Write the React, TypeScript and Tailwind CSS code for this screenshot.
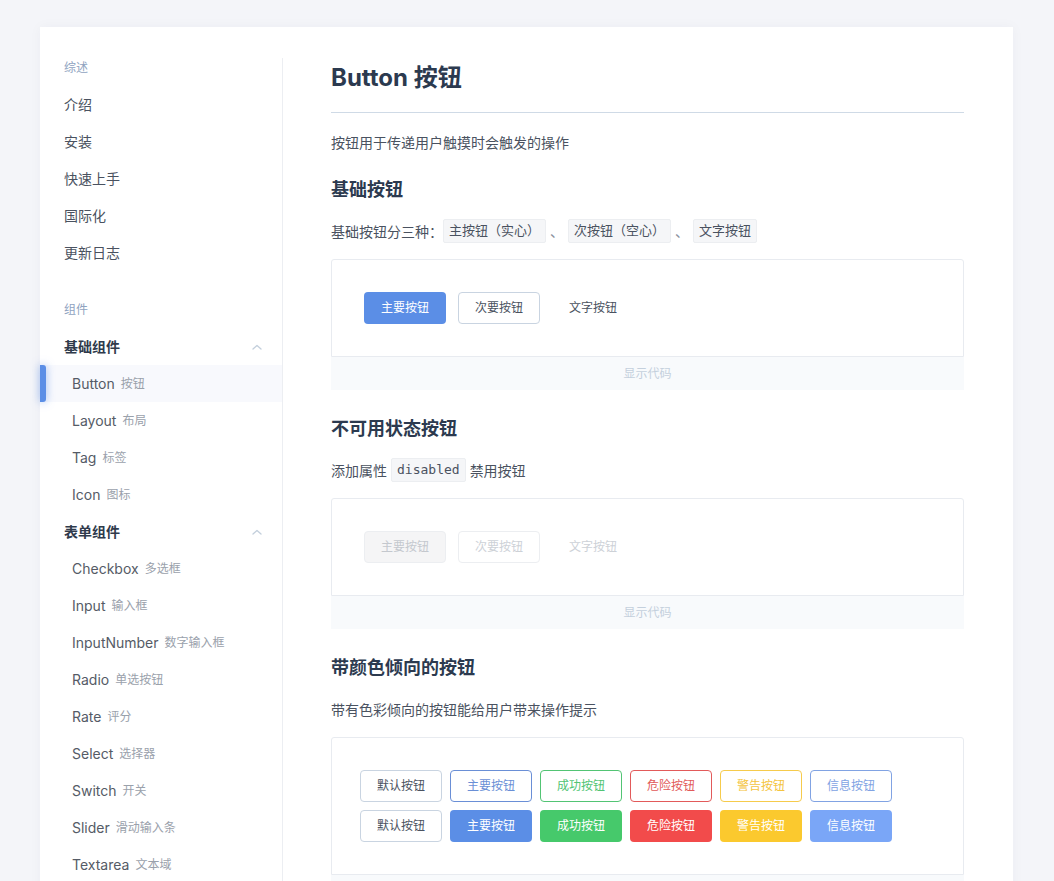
import React from "react";

const FONT = { fontFamily: 'Inter, "Noto Sans CJK SC", sans-serif' };

// ── Sidebar ──────────────────────────────────────────────────────────────────

const overview = ["介绍", "安装", "快速上手", "国际化", "更新日志"];

const basic = [
  ["Button", "按钮"],
  ["Layout", "布局"],
  ["Tag", "标签"],
  ["Icon", "图标"],
];

const form = [
  ["Checkbox", "多选框"],
  ["Input", "输入框"],
  ["InputNumber", "数字输入框"],
  ["Radio", "单选按钮"],
  ["Rate", "评分"],
  ["Select", "选择器"],
  ["Switch", "开关"],
  ["Slider", "滑动输入条"],
  ["Textarea", "文本域"],
];

function Chevron() {
  return (
    <svg width="10" height="6" viewBox="0 0 10 6" fill="none" className="mr-[20px]">
      <path d="M1 5 L5 1.5 L9 5" stroke="#c3cfdc" strokeWidth="1.3" strokeLinecap="round" strokeLinejoin="round" />
    </svg>
  );
}

function SubItem({ en, zh, active }: { en: string; zh: string; active?: boolean }) {
  return (
    <div className={["relative h-[37px] flex items-center pl-8", active ? "bg-[#f8f9fd]" : ""].join(" ")}>
      {active && (
        <span className="absolute left-0 top-0 h-full w-[6px] rounded-r-[3px] bg-[#5b8ee6] shadow-[0_0_8px_rgba(91,142,230,0.6)]" />
      )}
      <span className="text-[14px] text-[#555b66]">{en}</span>
      <span className="ml-[6px] text-[12px] text-[#9aa1ab]">{zh}</span>
    </div>
  );
}

function Sidebar() {
  return (
    <aside className="w-[243px] shrink-0 border-r border-[#eceef2] mt-[31px]">
      <div className="mt-[1px] h-[18px] flex items-center pl-6 text-[12px] text-[#8fa3bf]">综述</div>
      <div className="mt-[9px]">
        {overview.map((t) => (
          <div key={t} className="h-[37px] flex items-center pl-6 text-[14px] text-[#4a5260]">
            {t}
          </div>
        ))}
      </div>
      <div className="mt-[27px] h-[24px] flex items-center pl-6 text-[12px] text-[#8fa3bf]">组件</div>
      <div className="mt-[6px] h-[37px] flex items-center justify-between pl-6 text-[14px] font-semibold text-[#2f3a4b]">
        基础组件
        <Chevron />
      </div>
      {basic.map(([en, zh]) => (
        <SubItem key={en} en={en} zh={zh} active={en === "Button"} />
      ))}
      <div className="h-[37px] flex items-center justify-between pl-6 text-[14px] font-semibold text-[#2f3a4b]">
        表单组件
        <Chevron />
      </div>
      {form.map(([en, zh]) => (
        <SubItem key={en} en={en} zh={zh} />
      ))}
    </aside>
  );
}

// ── Content helpers ──────────────────────────────────────────────────────────

function Code({ children, mono }: { children: React.ReactNode; mono?: boolean }) {
  return (
    <span
      className="inline-flex items-center h-[24px] px-[5px] bg-[#f5f6f8] border border-[#eceef1] rounded-[2px] text-[13px] text-[#4a5260]"
      style={mono ? { fontFamily: '"DejaVu Sans Mono", "Liberation Mono", monospace', fontSize: 13 } : undefined}
    >
      {children}
    </span>
  );
}

function ShowCode() {
  return (
    <div className="h-[33px] flex items-center justify-center bg-[#f8fafc] text-[12px] text-[#c4d0dd]">
      显示代码
    </div>
  );
}

function H2({ children, first }: { children: React.ReactNode; first?: boolean }) {
  return (
    <h2 className={[first ? "mt-[22px]" : "mt-[24px]", "h-[28px] flex items-center text-[18px] font-bold text-[#2c3a4f]"].join(" ")}>
      {children}
    </h2>
  );
}

const btn = "w-[82px] h-[32px] rounded-[4px] text-[12px] flex items-center justify-center";

// ── Page ─────────────────────────────────────────────────────────────────────

export default function App() {
  return (
    <div className="min-h-screen bg-[#f4f5f9] pt-[27px] pl-[40px] overflow-hidden" style={FONT}>
      <div className="w-[973px] min-h-[900px] bg-white shadow-[0_0_12px_rgba(30,40,80,0.04)] flex">
        <Sidebar />

        <main className="flex-1 pl-12 pr-[49px] pt-[35px]">
          <h1 className="h-[32px] flex items-center text-[24px] font-bold text-[#2c3a4f]">Button 按钮</h1>
          <div className="mt-[18px] border-b border-[#cfdae6]" />

          <p className="mt-[18px] h-[22px] flex items-center text-[14px] text-[#4a5260]">
            按钮用于传递用户触摸时会触发的操作
          </p>

          {/* ── 基础按钮 ── */}
          <H2 first>基础按钮</H2>
          <div className="mt-[16px] h-[24px] flex items-center text-[14px] text-[#4a5260]">
            基础按钮分三种：
            <Code>主按钮（实心）</Code>
            <span className="mx-[4px] text-[#8b93a0]">、</span>
            <Code>次按钮（空心）</Code>
            <span className="mx-[4px] text-[#8b93a0]">、</span>
            <Code>文字按钮</Code>
          </div>
          <div className="mt-[16px]">
            <div className="rounded-t-[3px] border border-[#e8ebf0] p-8 flex gap-3">
              <button className={[btn, "bg-[#5b8ee6] text-white"].join(" ")}>主要按钮</button>
              <button className={[btn, "bg-white border border-[#c9d4e1] text-[#4a5260]"].join(" ")}>次要按钮</button>
              <button className={[btn, "text-[#4a5260]"].join(" ")}>文字按钮</button>
            </div>
            <ShowCode />
          </div>

          {/* ── 不可用状态按钮 ── */}
          <H2>不可用状态按钮</H2>
          <div className="mt-[16px] h-[24px] flex items-center text-[14px] text-[#4a5260]">
            添加属性
            <span className="mx-[4px]"><Code mono>disabled</Code></span>
            禁用按钮
          </div>
          <div className="mt-[16px]">
            <div className="rounded-t-[3px] border border-[#e8ebf0] p-8 flex gap-3">
              <button className={[btn, "bg-[#f5f5f6] border border-[#eceef1] text-[#c4c8ce]"].join(" ")}>主要按钮</button>
              <button className={[btn, "bg-white border border-[#eceef1] text-[#cdd1d7]"].join(" ")}>次要按钮</button>
              <button className={[btn, "text-[#cdd1d7]"].join(" ")}>文字按钮</button>
            </div>
            <ShowCode />
          </div>

          {/* ── 带颜色倾向的按钮 ── */}
          <H2>带颜色倾向的按钮</H2>
          <div className="mt-[16px] h-[24px] flex items-center text-[14px] text-[#4a5260]">
            带有色彩倾向的按钮能给用户带来操作提示
          </div>
          <div className="mt-[16px]">
            <div className="rounded-t-[3px] border border-[#e8ebf0] pl-7 pt-8 pb-8 flex flex-col gap-2">
              <div className="flex gap-2">
                <button className={[btn, "border border-[#c9d4e1] text-[#4a5260]"].join(" ")}>默认按钮</button>
                <button className={[btn, "border border-[#6a8fd6] text-[#6a8fd6]"].join(" ")}>主要按钮</button>
                <button className={[btn, "border border-[#52c474] text-[#52c474]"].join(" ")}>成功按钮</button>
                <button className={[btn, "border border-[#e25a5a] text-[#e25a5a]"].join(" ")}>危险按钮</button>
                <button className={[btn, "border border-[#f6cb4c] text-[#f4c440]"].join(" ")}>警告按钮</button>
                <button className={[btn, "border border-[#81a3e3] text-[#81a3e3]"].join(" ")}>信息按钮</button>
              </div>
              <div className="flex gap-2">
                <button className={[btn, "border border-[#c9d4e1] text-[#4a5260]"].join(" ")}>默认按钮</button>
                <button className={[btn, "bg-[#5b8ee6] text-white"].join(" ")}>主要按钮</button>
                <button className={[btn, "bg-[#46c96b] text-white"].join(" ")}>成功按钮</button>
                <button className={[btn, "bg-[#f24b4b] text-white"].join(" ")}>危险按钮</button>
                <button className={[btn, "bg-[#fbc92e] text-white"].join(" ")}>警告按钮</button>
                <button className={[btn, "bg-[#7aa6f7] text-white"].join(" ")}>信息按钮</button>
              </div>
            </div>
            <ShowCode />
          </div>
        </main>
      </div>
    </div>
  );
}
